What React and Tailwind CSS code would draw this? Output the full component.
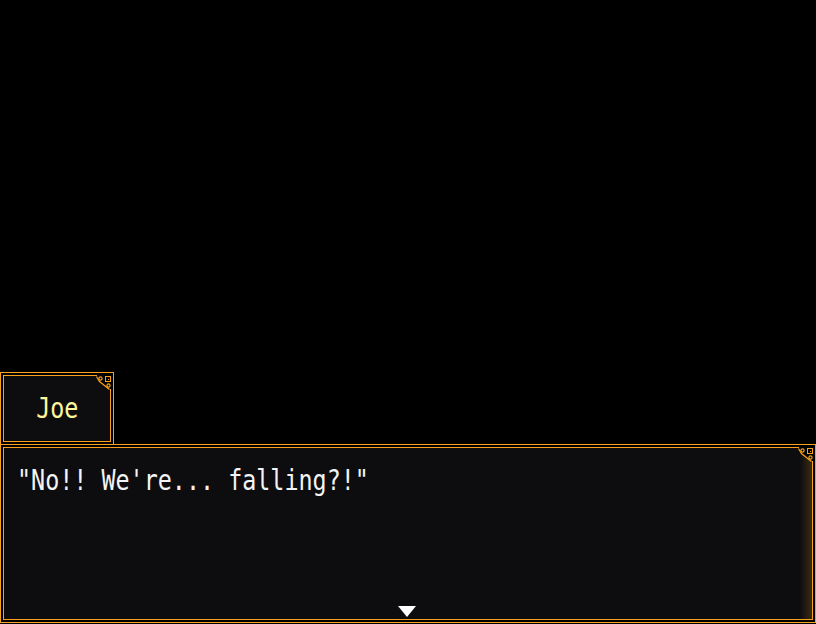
import React from 'react';

const ORANGE = '#f9a11b';

// small ornament that sits in the top-right corner of each window frame
function CornerOrnament() {
  return (
    <svg
      width="17"
      height="16"
      viewBox="0 0 17 16"
      className="absolute top-[2px] right-[1px]"
      shapeRendering="crispEdges"
    >
      <path d="M2 0 H17 V14 H14 L9 10 L4 6 Z" fill="#000" />
      <path d="M1.5 1.5 L4.5 6.5 L9.5 10.5 L14.5 14.5" stroke={ORANGE} strokeWidth="1.2" fill="none" shapeRendering="auto" />
      <rect x="10.5" y="1.5" width="5" height="5" stroke={ORANGE} strokeWidth="1" fill="none" />
      <rect x="12.5" y="3.5" width="1" height="1" fill={ORANGE} />
      <circle cx="5.5" cy="3.5" r="1.6" stroke={ORANGE} strokeWidth="1.2" fill="none" shapeRendering="auto" />
      <circle cx="13.5" cy="10.5" r="1.6" stroke={ORANGE} strokeWidth="1.2" fill="none" shapeRendering="auto" />
    </svg>
  );
}

function Frame({ className, children }) {
  return (
    <div className={`relative border border-[#f9a11b] bg-black p-[2px] ${className}`}>
      <div className="relative h-full border border-[#f9a11b] bg-[#0d0d10]">
        {children}
      </div>
      <CornerOrnament />
    </div>
  );
}

export default function App() {
  return (
    <div
      className="w-full h-[624px] bg-black flex flex-col pt-[372px] overflow-hidden"
      style={{ fontFamily: '"DejaVu Sans Mono", monospace' }}
    >
      {/* name box */}
      <Frame className="w-[114px] h-[73px] shrink-0">
        <div className="h-full flex items-center justify-center">
          <span className="inline-block text-[28px] leading-none text-[#fdf59a] scale-x-[0.835]">
            Joe
          </span>
        </div>
      </Frame>

      {/* message box */}
      <Frame className="w-full h-[179px] -mt-px shrink-0">
        <div className="pl-[13px] pt-[17px]">
          <span className="inline-block origin-left scale-x-[0.835] text-[28px] leading-[32px] text-[#f4f4f4] whitespace-pre">
            "No!! We're... falling?!"
          </span>
        </div>
        <div className="absolute top-0 right-0 bottom-0 w-[12px] bg-gradient-to-r from-transparent to-[#f9a11b]/20" />
        <svg width="18" height="11" viewBox="0 0 18 11" className="absolute left-[394px] top-[158px]">
          <polygon points="0,0 18,0 9,11" fill="#ffffff" />
        </svg>
      </Frame>
    </div>
  );
}
